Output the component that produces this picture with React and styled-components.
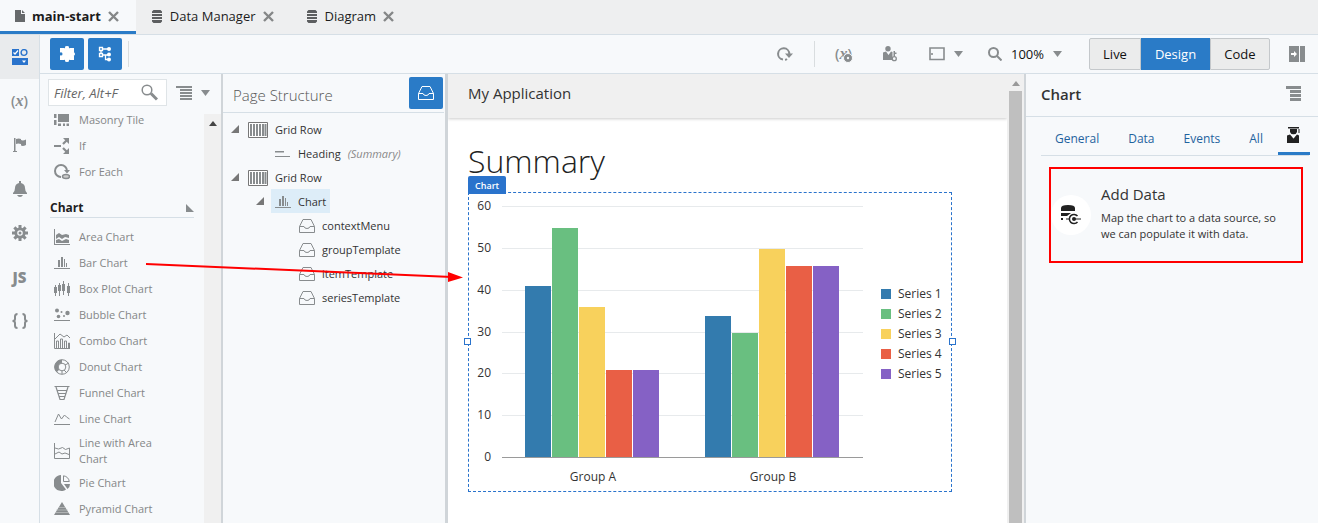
import React from "react";
import styled, { createGlobalStyle } from "styled-components";

const Global = createGlobalStyle`
  * { box-sizing: border-box; }
  html, body, #root { height: 100%; margin: 0; }
  body { font-family: "Open Sans", "Noto Sans", sans-serif; font-size: 11px; line-height: 16px; color: #333; background: #f7f9fb; overflow: hidden; }
  button, input { font: inherit; }
  h1, h2, h3, p, ul { margin: 0; padding: 0; }
  svg { display: block; flex: none; }
`;

const blue = "#2a7bc7";
const line = "#d6dfe6";
const gray = "#888c8e";

const Shell = styled.div`display: flex; flex-direction: column; height: 100vh; position: relative;`;
const FileTabs = styled.nav`display: flex; height: 35px; flex: none; background: #eeeff0; border-bottom: 1px solid ${line};`;
const FileTab = styled.div`
  display: flex; align-items: center; gap: 7px;
  padding: 0 17px 2px 15px; height: 34px;
  background: ${p => (p.$active ? "#f7f9fb" : "transparent")};
  box-shadow: ${p => (p.$active ? `inset 0 -3px ${blue}` : "none")};
`;
const TabName = styled.a`color: #1c1c1c; text-decoration: none; font-size: 13px; font-weight: ${p => (p.$active ? 700 : 400)};`;
const PlainButton = styled.button`display: flex; align-items: center; justify-content: center; gap: 9px; padding: 0; border: 0; background: none; color: inherit; cursor: pointer;`;
const Work = styled.div`display: flex; flex: 1; min-height: 0;`;
const Rail = styled.nav`width: 40px; flex: none; border-right: 1px solid ${line};`;
const RailButton = styled(PlainButton)`width: 39px; height: 44px; background: ${p => (p.$active ? "#e9ebed" : "none")};`;
const RailText = styled.span`font-size: 15px; font-weight: 800; color: ${gray};`;
const VarText = styled.span`position: relative; font-size: 14px; font-weight: 600; color: ${gray}; i { font-family: "Liberation Serif", serif; font-size: 16px; }`;
const VarBadge = styled.svg`position: absolute; right: -1px; bottom: -1px;`;
const Main = styled.main`flex: 1; min-width: 0; display: flex; flex-direction: column;`;
const Toolbar = styled.div`display: flex; align-items: center; height: 39px; flex: none; border-bottom: 1px solid ${line}; padding: 0 13px 0 10px;`;
const SquareButton = styled(PlainButton)`width: 34px; height: 32px; background: ${blue}; border-radius: 2px; margin-right: 4px;`;
const Divider = styled.span`width: 1px; height: 26px; background: #d9dddf; margin-left: ${p => p.$left || 2}px; margin-right: ${p => p.$right || 0}px;`;
const Spacer = styled.span`flex: 1;`;
const Tool = styled(PlainButton)`margin-right: ${p => p.$gap}px; color: #111; font-size: 13px;`;
const Modes = styled.div`display: flex; height: 32px; margin-right: 19px;`;
const Mode = styled.button`
  width: ${p => p.$w}px; padding: 0; font-size: 13px;
  border: 1px solid ${p => (p.$active ? blue : "#c4c8cb")};
  background: ${p => (p.$active ? blue : "#ebecec")};
  color: ${p => (p.$active ? "#fff" : "#111")};
  &:first-child { border-radius: 2px 0 0 2px; }
  &:last-child { border-radius: 0 2px 2px 0; }
`;
const Columns = styled.div`display: flex; flex: 1; min-height: 0;`;
const Palette = styled.aside`width: 181px; flex: none; display: flex; flex-direction: column;`;
const Splitter = styled.div`width: ${p => p.$w || 2}px; flex: none; background: #d0d5d9;`;
const FilterRow = styled.div`display: flex; align-items: center; padding: 4px 8px 0; height: 33px; flex: none;`;
const FilterField = styled.label`display: flex; align-items: center; width: 119px; height: 27px; border: 1px solid #dfe4e7; background: #fff; margin-right: 9px; padding: 0 8px 0 5px; justify-content: space-between;`;
const FilterInput = styled.input`width: 82px; border: 0; outline: 0; padding: 0; background: none; font-size: 13px; font-style: italic; &::placeholder { color: #666; opacity: 1; }`;
const PaletteBody = styled.div`display: flex; flex: 1; min-height: 0;`;
const PaletteList = styled.div`flex: 1; overflow: hidden; color: #858788;`;
const PaletteItem = styled.div`display: flex; align-items: center; gap: 9px; padding: 3px 30px 3px 14px; min-height: 26px;`;
const PaletteHead = styled.h2`
  display: flex; justify-content: space-between; align-items: center; height: 25px; margin: 8px 10px 6px 10px; padding-top: 6px;
  border-bottom: 1px solid ${line}; font-size: 12px; color: #1f1f1f; font-weight: 700;
`;
const PaletteScroll = styled.div`width: 17px; margin-top: 7px; background: #f0f0f0; display: flex; justify-content: center; padding-top: 7px;`;
const Structure = styled.aside`width: 222px; flex: none; padding-right: 1px;`;
const StructureHead = styled.div`display: flex; justify-content: space-between; align-items: center; height: 39px; border-bottom: 1px solid ${line}; padding-left: 10px; margin-bottom: 4px;`;
const StructureTitle = styled.h2`font-size: 15px; line-height: 20px; font-weight: 300; color: #555; padding-top: 4px;`;
const StructureButton = styled(SquareButton)`margin-right: 1px;`;
const TreeRow = styled.div`display: flex; align-items: center; gap: 7px; height: 24px; padding-left: ${p => p.$pad}px;`;
const TreeNode = styled.span`display: flex; align-items: center; gap: 7px; height: 24px; padding: 1px ${p => p.$inset || 0}px 0; background: ${p => (p.$active ? "#ddedf8" : "none")};`;
const Note = styled.em`color: #888;`;
const Stage = styled.section`flex: 1; min-width: 0; background: #fff; overflow: hidden;`;
const AppBar = styled.header`height: 44px; background: #f0f0f0; box-shadow: 0 1px 3px #ccc; padding: 9px 20px; line-height: 20px; font-size: 15px;`;
const PageBody = styled.div`padding: 28px 55px 20px 20px;`;
const Heading = styled.h1`font-size: 32px; line-height: 30px; font-weight: 300; color: #222; margin-bottom: 16px;`;
const ChartFrame = styled.div`position: relative; height: 300px; border: 1px dashed #2a73cc; padding-left: 8px;`;
const ChartTag = styled.span`position: absolute; left: -1px; top: -17px; height: 18px; padding: 2px 7px 0; border-radius: 2px 2px 0 0; background: #2a73cc; color: #fff; font-size: 9px; font-weight: 600;`;
const Handle = styled.span`position: absolute; top: 145px; ${p => p.$side}: -5px; width: 7px; height: 7px; border: 1px solid #2a73cc; background: #fff;`;
const ChartBody = styled.div`display: flex; align-items: flex-start; gap: 16px;`;
const Legend = styled.ul`list-style: none; padding-top: 91px;`;
const LegendItem = styled.li`display: flex; align-items: center; gap: 7px; height: 20px; font-size: 12px; white-space: nowrap;`;
const Swatch = styled.i`width: 10px; height: 10px; background: ${p => p.$color};`;
const StageScroll = styled.div`width: 17px; flex: none; background: #f0f0f0; display: flex; flex-direction: column; align-items: center; padding-top: 7px;`;
const Thumb = styled.div`flex: 1; width: 13px; margin-top: 5px; background: #bfbfbf;`;
const Inspector = styled.aside`width: 292px; flex: none;`;
const InspectorHead = styled.div`display: flex; justify-content: space-between; align-items: center; height: 43px; padding: 0 16px 2px 15px; border-bottom: 1px solid ${line};`;
const InspectorTitle = styled.h2`font-size: 15px; line-height: 20px; font-weight: 600; color: #333;`;
const InspectorTabs = styled.nav`display: flex; gap: 1px; height: 39px; margin: 0 9px 0 15px; border-bottom: 1px solid ${line};`;
const InspectorTab = styled.a`display: flex; align-items: center; padding: 6px 14px 0; color: #1f639e; text-decoration: none; font-size: 12px;`;
const AssistTab = styled(PlainButton)`width: 32px; flex: none; margin-left: auto; border-bottom: 3px solid ${blue};`;
const Card = styled.section`display: flex; align-items: center; gap: 10px; height: 96px; margin: 11px 15px 0 23px; padding-right: 16px; border: 2px solid #f00;`;
const Disc = styled.span`display: flex; align-items: center; justify-content: center; width: 40px; height: 40px; border-radius: 50%; background: #fff; flex: none;`;
const CardBody = styled.div`padding-bottom: 4px;`;
const CardTitle = styled.h3`font-size: 15px; line-height: 20px; font-weight: 400; margin-bottom: 6px;`;
const CardText = styled.p`font-size: 11px; line-height: 16px;`;
const Arrow = styled.svg`position: absolute; left: 146px; top: 260px; pointer-events: none;`;

const S = ({ w = 16, h = 16, c = gray, children, sw = 1 }) => (
  <svg width={w} height={h} viewBox={`0 0 ${w} ${h}`} fill="none" stroke={c} strokeWidth={sw} aria-hidden="true">{children}</svg>
);
const F = ({ w = 16, h = 16, c = gray, d, children }) => (
  <svg width={w} height={h} viewBox={`0 0 ${w} ${h}`} fill={c} aria-hidden="true">{d && <path d={d} />}{children}</svg>
);

const Cross = () => <S w={11} h={11} sw={2.4} c="#858788"><path d="M1 1l9 9M10 1l-9 9" /></S>;
const Disk = () => <F w={12} h={13} c="#5c5e60" d="M2.500 0h7L11 1.500V3H1V1.500zM1 4h10v2H1zM1 7h10v2H1zM1 10h10v1.500L9.500 13h-7L1 11.500z" />;
const Caret = () => <F w={9} h={6} d="M0 0h9L4.500 6z" />;
const Bars = () => <F w={16} h={16} d="M0 0h15v3H0zM4 4h11v3H4zM4 8h11v3H4zM4 12h11v3H4z" />;
const ThinBars = () => <F w={16} h={16} d="M0 1h16v2H0zM4 4h12v2H4zM4 7h12v2H4zM4 10h12v2H4zM4 13h12v2H4z" />;
const Tray = ({ c = gray }) => <S c={c} w={16} h={14}><path d="M.5 7.500L4 .5h8l3.500 7v6H.5zM.5 7.500H5M11 7.500h4.500M5 7.500q.5 2 3 2t3-2" /></S>;
const UpMark = ({ c = "#444" }) => <F w={8} h={5} c={c} d="M4 0l4 5H0z" />;
const Fold = () => <F w={8} h={8} c="#777" d="M8 0v8H0z" />;
const GridGlyph = () => (
  <svg width="20" height="16" viewBox="0 0 20 16" aria-hidden="true">
    <path d="M.5.5h19v15H.5z" fill="#fff" stroke="#777" />
    <path d="M3 2v12M6 2v12M9 2v12M12 2v12M15 2v12M17.500 2v12" stroke={gray} strokeWidth="2" />
  </svg>
);
const BarGlyph = () => <F w={16} h={16} d="M0 13h16v1H0zM4 5h2v7H4zM7 2h2v10H7zM10 4h1v8h-1zM12 8h1v4h-1z" />;

const GearGlyph = () => (
  <svg width="16" height="16" viewBox="-8 -8 16 16" aria-hidden="true">
    <g fill={gray}>{[0, 45, 90, 135].map(a => <rect key={a} x="-1.500" y="-8" width="3" height="16" transform={`rotate(${a})`} />)}</g>
    <circle r="4.200" fill="#f7f9fb" stroke={gray} strokeWidth="2.800" /><circle r="1.500" fill={gray} />
  </svg>
);
const rail = [
  ["Components", <svg width="16" height="16" viewBox="0 0 16 16" aria-hidden="true"><path d="M0 0h7v7H0zM0 9h16v7H0z" fill="#2a73cc" /><circle cx="12" cy="3.500" r="2.900" fill="none" stroke="#2a73cc" strokeWidth="1.400" /><path d="M1.500 3.500L3 5l3-3.500" fill="none" stroke="#fff" strokeWidth="1.200" /><path d="M10 11.500h4l-2 2.500z" fill="#fff" /></svg>],
  ["Variables", <VarText>(<i>x</i>)</VarText>],
  ["Actions", <F d="M2 1h1.500v13H2zM1 14h4v1H1zM4 2q3-1 5 0v1q2 1 5-.5V8q-3 1.500-5 .5V7Q6 6 4 7z" />],
  ["Events", <F d="M7 0h2v2q4 1 4 5 0 3 2 5v1H1v-1q2-2 2-5 0-4 4-5zM5 14h6q-1 2-3 2t-3-2z" />],
  ["Settings", <GearGlyph />],
  ["JavaScript", <RailText>JS</RailText>],
  ["JSON", <S w={16} h={16} sw={2}><path d="M5.500 1Q3 1 3 3.500V6Q3 8 .5 8 3 8 3 10v2.500Q3 15 5.500 15M10.500 1Q13 1 13 3.500V6q0 2 2.500 2Q13 8 13 10v2.500Q13 15 10.500 15" /></S>],
];

const paletteTop = [
  ["Masonry Tile", <F d="M4 2h11v8H4zM0 2h2.500v4H0zM0 8h2.500v5H0zM4 11.500h3V14H4zM9 11.500h2V14H9zM12.500 11.500H15V14h-2.500z" />],
  ["If", <svg width="16" height="16" viewBox="0 0 16 16" aria-hidden="true"><path d="M0 8h7M9 6l4-4M9 10l4 4" stroke={gray} strokeWidth="2.200" /><path d="M9 0h6v6zM9 16h6v-6z" fill={gray} /></svg>],
  ["For Each", <svg width="16" height="16" viewBox="0 0 16 16" aria-hidden="true"><path d="M7 13A6 6 0 1 1 13 7" fill="none" stroke={gray} strokeWidth="2" /><path d="M10 6h6l-3 3.500z" fill={gray} /><ellipse cx="12" cy="12.500" rx="3.500" ry="2" fill="#ccc" stroke={gray} strokeWidth="1.500" /></svg>],
];
const paletteCharts = [
  ["Area Chart", <F d="M0 0h1v15h15v1H0zM2 6l3-2 3 2 4-1 3 1v3l-4-1-3 2-3-2-3 2zM2 11l3-1 3 2 4-2 3 1v3H2z" />],
  ["Bar Chart", <BarGlyph />],
  ["Box Plot Chart", <svg width="16" height="16" viewBox="0 0 16 16" aria-hidden="true"><path d="M1.500 4v11M5.500 2v13M9.500 0v14M14.500 2v13" stroke={gray} /><path d="M0 6h3v6H0zM4 4h3v6H4zM8 3h3v7H8zM13 5h3v7h-3z" fill={gray} /></svg>],
  ["Bubble Chart", <F d="M0 13h16v1H0z"><circle cx="3" cy="3.500" r="2" /><circle cx="13.500" cy="6" r="2.200" /><circle cx="4.500" cy="9.500" r="1.800" /><circle cx="7.500" cy="5" r="1" /><circle cx="10" cy="9" r="1" /></F>],
  ["Combo Chart", <S><path d="M.5 0v15.500H16M1 6l5-5 4 3 3-2 3 3" /><path d="M2.500 15V8h2v7M6.500 15V6h2v9M10.500 15V8h2v7M14.500 15v-5h1v5" /></S>],
  ["Donut Chart", <S><circle cx="8" cy="8" r="7.300" /><circle cx="8" cy="8" r="3.800" /><path d="M8 2.500A5.500 5.500 0 0 0 4 12" strokeWidth="3.500" /><path d="M11 6l4-2M10 11l3 3M8 12v3" /></S>],
  ["Funnel Chart", <S><path d="M.5 1.500h15M2 2l4 12.500h4L14 2M3 5.500h10M4 8.500h8M5 11.500h6" strokeWidth="1.200" /></S>],
  ["Line Chart", <S><path d="M0 13.500h16M1 11l3.500-8 3 5 3-4 2 2 3 2" /></S>],
  ["Line with Area Chart", <S><path d="M.5 0v15.500h15V5l-4 1.500-3-2-4 1.500L1 5M1 11l4-2 3 2 3-1 4 1.500" /></S>],
  ["Pie Chart", <svg width="16" height="16" viewBox="0 0 16 16" aria-hidden="true"><path d="M7 0v8l5 6.500A8 8 0 1 1 7 0zM10 9h6q0 3-2.500 5z" fill={gray} /><path d="M9.500.8A7 7 0 0 1 15.300 6.500H9.500z" fill="none" stroke={gray} /></svg>],
  ["Pyramid Chart", <svg width="16" height="16" viewBox="0 0 16 16" aria-hidden="true"><path d="M8 1l8 13H0z" fill={gray} /><path d="M4 6.500h8M2 9h12M1 11.500h14" stroke="#c9cccd" strokeWidth=".6" /></svg>],
];

const colors = ["#337bae", "#69bf80", "#f8d15c", "#e95f45", "#8561c5"];
const groups = [["Group A", [41, 55, 36, 21, 21]], ["Group B", [34, 30, 50, 46, 46]]];
const yOf = v => Math.round(265 - (v * 251) / 60);

function BarChart() {
  return (
    <svg width="388" height="297" viewBox="0 0 388 297" fontFamily="Open Sans, sans-serif" fontSize="12" fill="#333">
      {[60, 50, 40, 30, 20, 10, 0].map(v => (
        <g key={v}>
          {v > 0 && <path d={`M25 ${yOf(v) - .5}h361`} stroke="#e7eaec" />}
          <text x="14" y={yOf(v) + 3} textAnchor="end">{v}</text>
        </g>
      ))}
      {groups.map(([name, values], g) => (
        <g key={name}>
          {values.map((v, i) => <rect key={i} x={48 + g * 180 + i * 27} y={yOf(v)} width="26" height={265 - yOf(v)} fill={colors[i]} />)}
          <text x={116 + g * 180} y="288" textAnchor="middle">{name}</text>
        </g>
      ))}
      <path d="M25 264.500h361" stroke="#9a9a9a" />
    </svg>
  );
}

const Item = ({ item }) => <PaletteItem>{item[1]}<span>{item[0]}</span></PaletteItem>;

export default function App() {
  return (
    <>
      <Global />
      <Shell>
        <FileTabs>
          <FileTab $active><F w={10} h={12} c="#66696b" d="M0 0h6v4h4v8H0zM7 0l3 3H7z" /><TabName href="#main" $active>main-start</TabName><PlainButton aria-label="Close main-start"><Cross /></PlainButton></FileTab>
          <FileTab><Disk /><TabName href="#data">Data Manager</TabName><PlainButton aria-label="Close Data Manager"><Cross /></PlainButton></FileTab>
          <FileTab><Disk /><TabName href="#diagram">Diagram</TabName><PlainButton aria-label="Close Diagram"><Cross /></PlainButton></FileTab>
        </FileTabs>
        <Work>
          <Rail>{rail.map(([name, icon], i) => <RailButton key={name} aria-label={name} $active={i === 0}>{icon}</RailButton>)}</Rail>
          <Main>
            <Toolbar>
              <SquareButton aria-label="Components"><F c="#fff" d="M1 2h4q1.500 1 1-1 0-1 2-1t2 1q-.5 2 1 1h4v4q0 1-1 .3Q16 6 16 8t-2 1.500q1-.5 1 .8V14h-4q-1.500-1-1 1 0 1-2 1t-2-1q.5-2-1-1H1v-4q0-1.300 1-.5 1.500 0 1.500-1.500T2 6.300Q1 7 1 6z" /></SquareButton>
              <SquareButton aria-label="Structure"><S c="#fff" sw={1.3}><path d="M2.500 1.500h3v3h-3zM2.500 7.500h3v3h-3zM6 3h5M6 9h5M8.500 9v4.500H11M4 5v2" /><g fill="#fff" stroke="none"><circle cx="12" cy="3" r="2" /><circle cx="12" cy="8.500" r="2" /><circle cx="12" cy="13.500" r="2" /></g></S></SquareButton>
              <Divider />
              <Spacer />
              <Tool aria-label="Reload" $gap={0}><svg width="16" height="16" viewBox="0 0 16 16" aria-hidden="true"><path d="M6 13.500A5.600 5.600 0 1 1 12.300 8M10 13q-1 .7-2 .8" fill="none" stroke={gray} strokeWidth="2" /><path d="M8 7.500h8L12 12z" fill={gray} /></svg></Tool>
              <Divider $left={21} $right={20} />
              <Tool aria-label="Variables" $gap={31}>
                <VarText>(<i>x</i>)<VarBadge width="10" height="10" viewBox="0 0 10 10"><circle cx="5" cy="5" r="4.500" fill={gray} stroke="#f7f9fb" /><circle cx="5" cy="5" r="1.200" fill="#f7f9fb" /></VarBadge></VarText>
              </Tool>
              <Tool aria-label="User" $gap={32}><F w={14} d="M0 6.500l3-1L5.500 9 8 5.500l1.500.5v8H0z"><circle cx="5" cy="2.800" r="2.700" /><path d="M10.500 5h1.500v1.500h1.500V8H12v2h-1.500z" /><circle cx="11.300" cy="12.700" r="2" fill="#f7f9fb" stroke={gray} strokeWidth="1.300" /></F></Tool>
              <Tool aria-label="Screen size" $gap={25}><S h={14} sw={1.6}><path d="M1 1h14v11.500H1zM3 6v2" /></S><Caret /></Tool>
              <Tool aria-label="Zoom" $gap={27}><S w={14} h={14} sw={2}><circle cx="5.500" cy="5.500" r="4.500" /><path d="M9 9l4.500 4.500" /></S>100%<Caret /></Tool>
              <Modes><Mode $w={52}>Live</Mode><Mode $w={69} $active>Design</Mode><Mode $w={60}>Code</Mode></Modes>
              <PlainButton aria-label="Toggle panel"><F d="M0 0h10v16H0zM11 0h5v16h-5z"><path fill="#fff" d="M2 7h3V5l3 3-3 3V9H2z" /></F></PlainButton>
            </Toolbar>
            <Columns>
              <Palette>
                <FilterRow>
                  <FilterField><FilterInput placeholder="Filter, Alt+F" aria-label="Filter" /><S w={17} h={17}><circle cx="6" cy="6" r="4.800" strokeWidth="1.500" /><path d="M10 9.500l6 6" strokeWidth="3" /></S></FilterField>
                  <PlainButton aria-label="View options"><ThinBars /><Caret /></PlainButton>
                </FilterRow>
                <PaletteBody>
                  <PaletteList>
                    {paletteTop.map(i => <Item key={i[0]} item={i} />)}
                    <PaletteHead>Chart<F w={8} h={8} d="M0 0l8 8H0z" /></PaletteHead>
                    {paletteCharts.map(i => <Item key={i[0]} item={i} />)}
                  </PaletteList>
                  <PaletteScroll><UpMark /></PaletteScroll>
                </PaletteBody>
              </Palette>
              <Splitter />
              <Structure>
                <StructureHead><StructureTitle>Page Structure</StructureTitle><StructureButton aria-label="Show slots"><Tray c="#fff" /></StructureButton></StructureHead>
                <TreeRow $pad={8}><Fold /><TreeNode $inset={2}><GridGlyph />Grid Row</TreeNode></TreeRow>
                <TreeRow $pad={52}><TreeNode><F w={16} h={8} d="M0 1h9v1.500H0zM0 6h15v1H0z" />Heading<Note>(Summary)</Note></TreeNode></TreeRow>
                <TreeRow $pad={8}><Fold /><TreeNode $inset={2}><GridGlyph />Grid Row</TreeNode></TreeRow>
                <TreeRow $pad={33}><Fold /><TreeNode $active $inset={4}><BarGlyph />Chart</TreeNode></TreeRow>
                {["contextMenu", "groupTemplate", "itemTemplate", "seriesTemplate"].map(n => <TreeRow key={n} $pad={76}><TreeNode><Tray />{n}</TreeNode></TreeRow>)}
              </Structure>
              <Splitter $w={3} />
              <Stage>
                <AppBar>My Application</AppBar>
                <PageBody>
                  <Heading>Summary</Heading>
                  <ChartFrame>
                    <ChartTag>Chart</ChartTag><Handle $side="left" /><Handle $side="right" />
                    <ChartBody>
                      <BarChart />
                      <Legend>{colors.map((c, i) => <LegendItem key={c}><Swatch $color={c} />Series {i + 1}</LegendItem>)}</Legend>
                    </ChartBody>
                  </ChartFrame>
                </PageBody>
              </Stage>
              <StageScroll><UpMark c="#999" /><Thumb /></StageScroll>
              <Splitter />
              <Inspector>
                <InspectorHead><InspectorTitle>Chart</InspectorTitle><PlainButton aria-label="Panel menu"><Bars /></PlainButton></InspectorHead>
                <InspectorTabs>
                  {["General", "Data", "Events", "All"].map(t => <InspectorTab key={t} href={"#" + t}>{t}</InspectorTab>)}
                  <AssistTab aria-label="Quick start"><F w={14} c="#222" d="M1 0h11v1.500H1zM3 2h7v3q-1 2.500-3.500 2.500T3 5zM0 8.500l3-1 3.500 4 3.500-4 2 1V16H0zM11.500 2h1v4h-1z"><path fill="#fff" d="M4 7.500h5l-2.500 4z" opacity=".8" /></F></AssistTab>
                </InspectorTabs>
                <Card>
                  <Disc><svg width="20" height="20" viewBox="0 0 20 20" aria-hidden="true"><path d="M0 3Q0 0 7 0t7 3v3H0zM0 8h10l-4 3H0zM0 13h2v2H0z" fill="#222" /><circle cx="13" cy="14" r="5.500" fill="#fff" /><path d="M16.500 17a4.600 4.600 0 1 1 0-6" fill="none" stroke="#222" strokeWidth="1.500" /><circle cx="13" cy="14" r="2" fill="#222" /><path d="M13 13.500h7v1h-7zM5 13.500h4v1H5z" fill="#222" /></svg></Disc>
                  <CardBody><CardTitle>Add Data</CardTitle><CardText>Map the chart to a data source, so we can populate it with data.</CardText></CardBody>
                </Card>
              </Inspector>
            </Columns>
          </Main>
        </Work>
        <Arrow width="318" height="24" viewBox="0 0 318 24"><path d="M0 4L306 17" stroke="#f00" strokeWidth="2" /><path d="M302 12l15 5.500-15 4.500z" fill="#f00" /></Arrow>
      </Shell>
    </>
  );
}
